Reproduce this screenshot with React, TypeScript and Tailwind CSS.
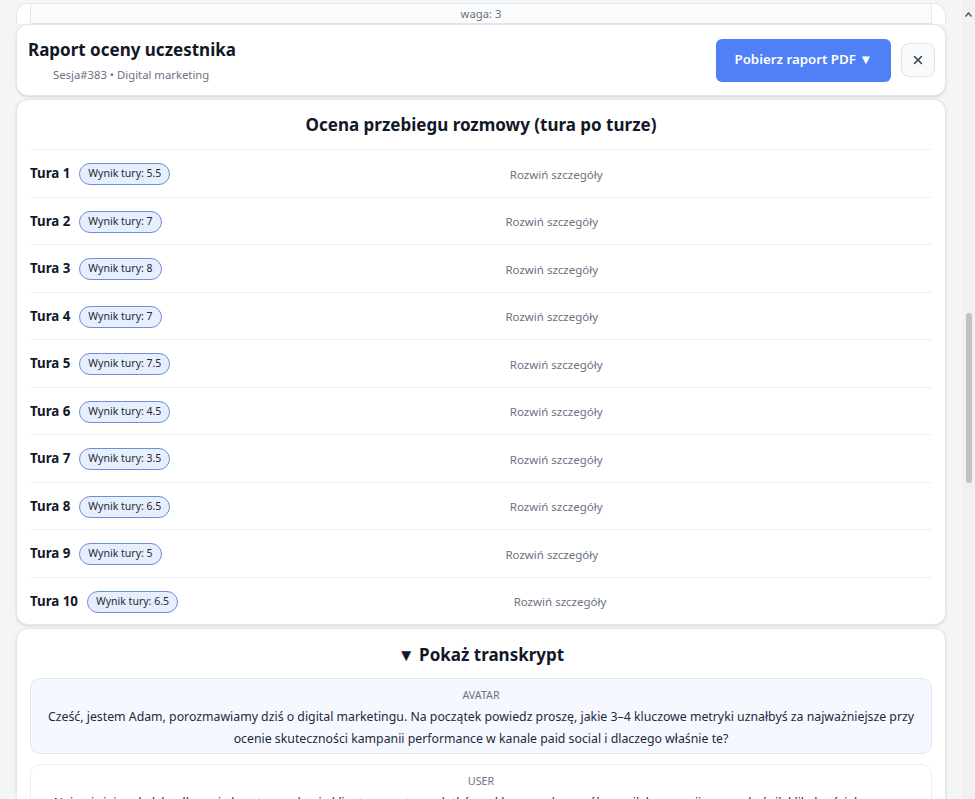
import { X } from "lucide-react";

const turns = [
  { n: 1, score: "5.5" },
  { n: 2, score: "7" },
  { n: 3, score: "8" },
  { n: 4, score: "7" },
  { n: 5, score: "7.5" },
  { n: 6, score: "4.5" },
  { n: 7, score: "3.5" },
  { n: 8, score: "6.5" },
  { n: 9, score: "5" },
  { n: 10, score: "6.5" },
];

export default function App() {
  return (
    <div
      className="flex h-[799px] w-full overflow-hidden bg-[#f4f5f7] text-[#111827]"
      style={{ fontFamily: '"Noto Sans", "Open Sans", sans-serif' }}
    >
      {/* przewijana zawartość */}
      <div className="flex min-w-0 flex-1 flex-col px-4">
        {/* poprzednia karta (częściowo zasłonięta) */}
        <div className="mt-[3px] h-[21px] shrink-0 rounded-t-xl border border-b-0 border-[#e5e7eb] bg-white px-[13px]">
          <div className="flex h-full items-end justify-center border-x border-b border-[#e5e7eb] bg-[#fafbfd] pb-[1px] text-[11.3px] leading-4 text-gray-500">
            waga: 3
          </div>
        </div>

        {/* nagłówek raportu */}
        <div className="flex h-[72px] shrink-0 items-center justify-between rounded-xl border border-[#e5e7eb] bg-white pl-[11px] pr-[10px] shadow-sm">
          <div className="flex flex-col">
            <h2 className="text-[17px] font-bold leading-6 text-[#111827]">Raport oceny uczestnika</h2>
            <span className="mt-[5px] pl-[25px] text-[11.3px] leading-4 text-gray-500">Sesja#383 • Digital marketing</span>
          </div>
          <div className="flex items-center gap-[10px]">
            <button className="h-[43px] w-[175px] rounded-md bg-[#4f80f6] text-[13.3px] font-semibold text-white">
              Pobierz raport PDF ▼
            </button>
            <button className="flex h-[34px] w-[34px] items-center justify-center rounded-lg border border-[#dfe3e8] bg-[#f8fafc] text-gray-700">
              <X className="h-3.5 w-3.5" strokeWidth={2.6} />
            </button>
          </div>
        </div>

        {/* ocena tura po turze */}
        <div className="mt-[3px] shrink-0 rounded-xl border border-[#e5e7eb] bg-white px-[13px] shadow-sm">
          <h3 className="pb-[10px] pt-[11px] text-center text-[17px] font-bold leading-7">
            Ocena przebiegu rozmowy (tura po turze)
          </h3>
          <div className="flex flex-col">
            {turns.map((t) => (
              <div key={t.n} className="flex h-[47.5px] items-center border-t border-[#eef0f3] pt-[2px]">
                <div className="flex items-center gap-[9px]">
                  <span className="text-[13.3px] font-bold">Tura {t.n}</span>
                  <span className="flex h-[22px] items-center rounded-full border border-[#6d8fd9] bg-[#e7effd] px-2 text-[10.5px] text-gray-800">
                    Wynik tury: {t.score}
                  </span>
                </div>
                <button className="ml-[10px] flex-1 text-center text-[11.5px] text-gray-500">Rozwiń szczegóły</button>
              </div>
            ))}
          </div>
        </div>

        {/* transkrypt */}
        <div className="mt-[3px] shrink-0 rounded-xl border border-[#e5e7eb] bg-white px-[13px] pb-4 shadow-sm">
          <h3 className="pt-[12px] text-center text-[17px] font-bold leading-7">▼ Pokaż transkrypt</h3>
          <div className="mt-[9px] flex flex-col gap-[10px]">
            <div className="rounded-[10px] border border-[#dde5f4] bg-[#f5f8ff] px-4 pb-[3px] pt-[8px] text-center">
              <div className="text-[10.7px] uppercase leading-4 text-gray-500">Avatar</div>
              <p className="mt-[3px] text-[12.3px] leading-[22px] text-gray-800">
                Cześć, jestem Adam, porozmawiamy dziś o digital marketingu. Na początek powiedz proszę, jakie 3–4 kluczowe metryki uznałbyś za najważniejsze przy ocenie skuteczności kampanii performance w kanale paid social i dlaczego właśnie te?
              </p>
            </div>
            <div className="rounded-[10px] border border-[#eceef2] bg-white px-4 pb-[3px] pt-[8px] text-center">
              <div className="text-[10.7px] uppercase leading-4 text-gray-500">User</div>
              <p className="mt-[3px] text-[12.3px] leading-[22px] text-gray-800">
                Najważniejsze byłyby dla mnie koszt pozyskania klienta, zwrot z wydatków reklamowych, współczynnik konwersji oraz wskaźnik klikalności, bo razem pokazują efektywność kampanii.
              </p>
            </div>
          </div>
        </div>
      </div>

      {/* pasek przewijania */}
      <div className="flex w-[13px] shrink-0 flex-col items-center bg-[#f1f1f1]">
        <svg className="mt-[12px]" width="7" height="5" viewBox="0 0 7 5">
          <path d="M0.5 4.5 L3.5 1 L6.5 4.5" fill="none" stroke="#505050" strokeWidth="1.4" />
        </svg>
        <div className="mt-[296px] h-[170px] w-[6px] rounded-full bg-[#c1c1c1]" />
      </div>
    </div>
  );
}
